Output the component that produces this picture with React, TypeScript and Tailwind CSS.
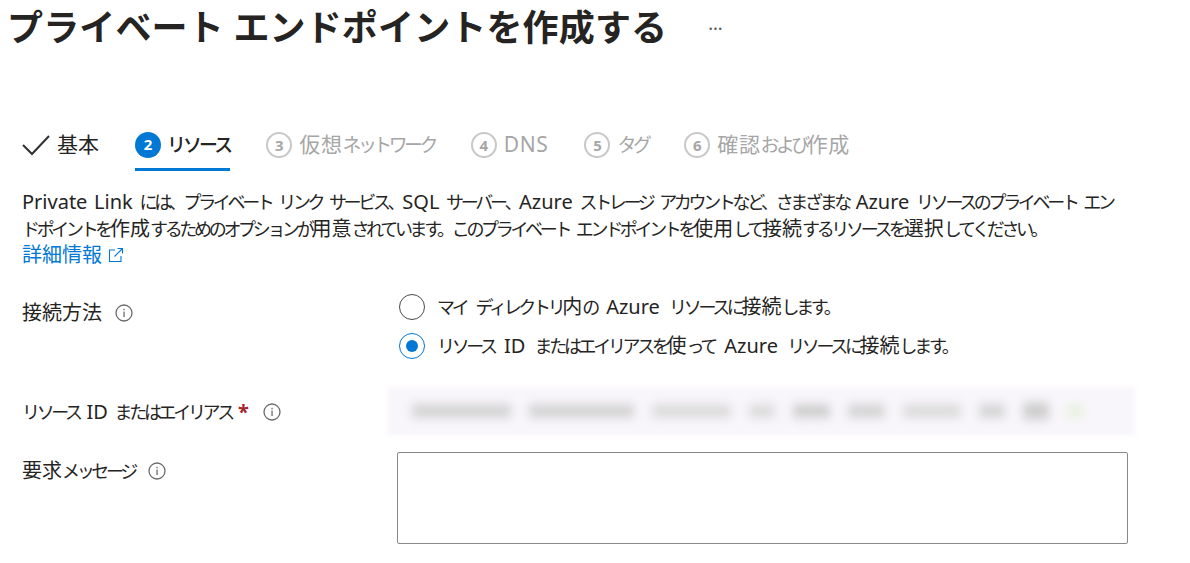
import React from 'react';

const font = { fontFamily: '"Noto Sans", "Noto Sans CJK JP", sans-serif' };

// kana in the reference is much narrower than kanji and latin
const Jp = ({ text, kana = 'text-[0.9em] tracking-[-0.185em]' }: { text: string; kana?: string }) => (
  <>
    {text.split(/([\u3001-\u3002\u3040-\u30ff]+)/).map((part, i) =>
      /^[\u3001-\u3002\u3040-\u30ff]/.test(part) ? (
        <span key={i} className={kana}>{part}</span>
      ) : (
        <span key={i}>{part}</span>
      )
    )}
  </>
);

const InfoIcon = () => (
  <svg width="18" height="18" viewBox="0 0 18 18" fill="none" className="shrink-0">
    <circle cx="9" cy="9" r="8" stroke="#6b6b6b" strokeWidth="1.3" />
    <rect x="8.4" y="7.6" width="1.3" height="5.4" fill="#6b6b6b" />
    <rect x="8.4" y="4.8" width="1.3" height="1.5" fill="#6b6b6b" />
  </svg>
);

const Step = ({ n, label }: { n: number; label: string }) => (
  <div className="ml-[36px] flex h-[42px] items-center gap-[7px] text-[#a6a6a6]">
    <span className="flex h-[26px] w-[26px] items-center justify-center rounded-full border-2 border-[#c8c8c8] text-[15px] font-bold">
      {n}
    </span>
    <span className="text-[21px] tracking-[0.6px] whitespace-nowrap"><Jp text={label} /></span>
  </div>
);

export default function App() {
  return (
    <div className="h-[563px] w-[1190px] overflow-hidden bg-white text-[#252423]" style={font}>
      {/* Title */}
      <div className="flex h-[56px] items-center pl-[7px]">
        <h1 className="text-[36px] font-bold tracking-[0.15px] whitespace-nowrap">プライベート エンドポイントを作成する</h1>
        <span className="ml-[41px] text-[18px] text-[#555]">···</span>
      </div>

      {/* Steps */}
      <div className="mt-[68px] flex h-[48px] items-start pl-[22px]">
        <div className="flex h-[42px] items-center gap-[7px]">
          <svg width="28" height="22" viewBox="0 0 28 22" fill="none">
            <path d="M1 11 L10 20 L27 2" stroke="#323130" strokeWidth="2" />
          </svg>
          <span className="text-[21px]">基本</span>
        </div>
        <div className="ml-[36px] flex h-[47px] items-center gap-[6px] border-b-[3px] border-[#0078d4] pb-[3px]">
          <span className="flex h-[26px] w-[26px] items-center justify-center rounded-full bg-[#0078d4] text-[15px] font-bold text-white">2</span>
          <span className="text-[21px] font-medium"><Jp text="リソース" kana="text-[0.9em] tracking-[-0.15em]" /></span>
        </div>
        <Step n={3} label="仮想ネットワーク" />
        <Step n={4} label="DNS" />
        <Step n={5} label="タグ" />
        <Step n={6} label="確認および作成" />
      </div>

      {/* Description */}
      <div className="mt-[17px] pl-[22px] text-[20px] leading-[25.5px] [word-spacing:1.5px]">
        <p className="whitespace-nowrap"><Jp text="Private Link には、プライベート リンク サービス、SQL サーバー、Azure ストレージ アカウントなど、さまざまな Azure リソースのプライベート エン" /></p>
        <p className="whitespace-nowrap"><Jp text="ドポイントを作成するためのオプションが用意されています。このプライベート エンドポイントを使用して接続するリソースを選択してください。" /></p>
        <a className="flex h-[25px] items-center gap-[6px] text-[#0078d4]">
          詳細情報
          <svg width="16" height="16" viewBox="0 0 16 16" fill="none" stroke="#0078d4" strokeWidth="1.1">
            <path d="M7 3 H1.5 V14.5 H13 V9" />
            <path d="M6.5 9.5 L14.5 1.5 M9.5 1.5 H14.5 V6.5" />
          </svg>
        </a>
      </div>

      {/* Form */}
      <div className="mt-[27px] grid grid-cols-[375px_731px] pl-[22px] text-[20px] [word-spacing:1.5px]">
        <div className="flex h-[38px] items-center gap-[13px]">
          <span>接続方法</span>
          <InfoIcon />
        </div>
        <div className="flex flex-col gap-[13px] pl-[2px] [word-spacing:4px]">
          <label className="flex h-[26px] items-center gap-[12px]">
            <span className="h-[26px] w-[26px] rounded-full border border-[#4a4a4a]" />
            <span className="whitespace-nowrap"><Jp text="マイ ディレクトリ内の Azure リソースに接続します。" /></span>
          </label>
          <label className="flex h-[26px] items-center gap-[12px]">
            <span className="flex h-[26px] w-[26px] items-center justify-center rounded-full border border-[#0078d4]">
              <span className="h-[12px] w-[12px] rounded-full bg-[#0078d4]" />
            </span>
            <span className="whitespace-nowrap"><Jp text="リソース ID またはエイリアスを使って Azure リソースに接続します。" /></span>
          </label>
        </div>

        <div className="mt-[31px] flex h-[44px] items-center">
          <span className="whitespace-nowrap"><Jp text="リソース ID またはエイリアス" /></span>
          <span className="ml-[6px] font-bold text-[#a4262c]">*</span>
          <span className="ml-[14px]"><InfoIcon /></span>
        </div>
        {/* blurred-out resource id */}
        <div className="mt-[28px] -ml-[9px] flex h-[48px] w-[747px] items-center gap-[18px] bg-[#f9f6fb] pl-[24px] blur-[2px]">
          <div className="h-[14px] w-[99px] bg-[#d4d4d4] blur-[4px]" />
          <div className="h-[14px] w-[105px] bg-[#d4d4d4] blur-[4px]" />
          <div className="h-[14px] w-[79px] bg-[#dcdcdc] blur-[4px]" />
          <div className="h-[14px] w-[26px] bg-[#dcdcdc] blur-[4px]" />
          <div className="h-[14px] w-[37px] bg-[#cfcfcf] blur-[4px]" />
          <div className="h-[14px] w-[37px] bg-[#d4d4d4] blur-[4px]" />
          <div className="h-[14px] w-[58px] bg-[#dcdcdc] blur-[4px]" />
          <div className="h-[14px] w-[26px] bg-[#d4d4d4] blur-[4px]" />
          <div className="h-[18px] w-[26px] bg-[#cfcfcf] blur-[4px]" />
          <div className="h-[14px] w-[16px] bg-[#e8f2e0] blur-[4px]" />
        </div>

        <div className="mt-[23px] flex h-[26px] items-center gap-[13px]">
          <span className="whitespace-nowrap"><Jp text="要求メッセージ" /></span>
          <InfoIcon />
        </div>
        <textarea className="mt-[17px] h-[92px] w-[731px] resize-none rounded-[2px] border border-[#8a8886] bg-white" />
      </div>
    </div>
  );
}
